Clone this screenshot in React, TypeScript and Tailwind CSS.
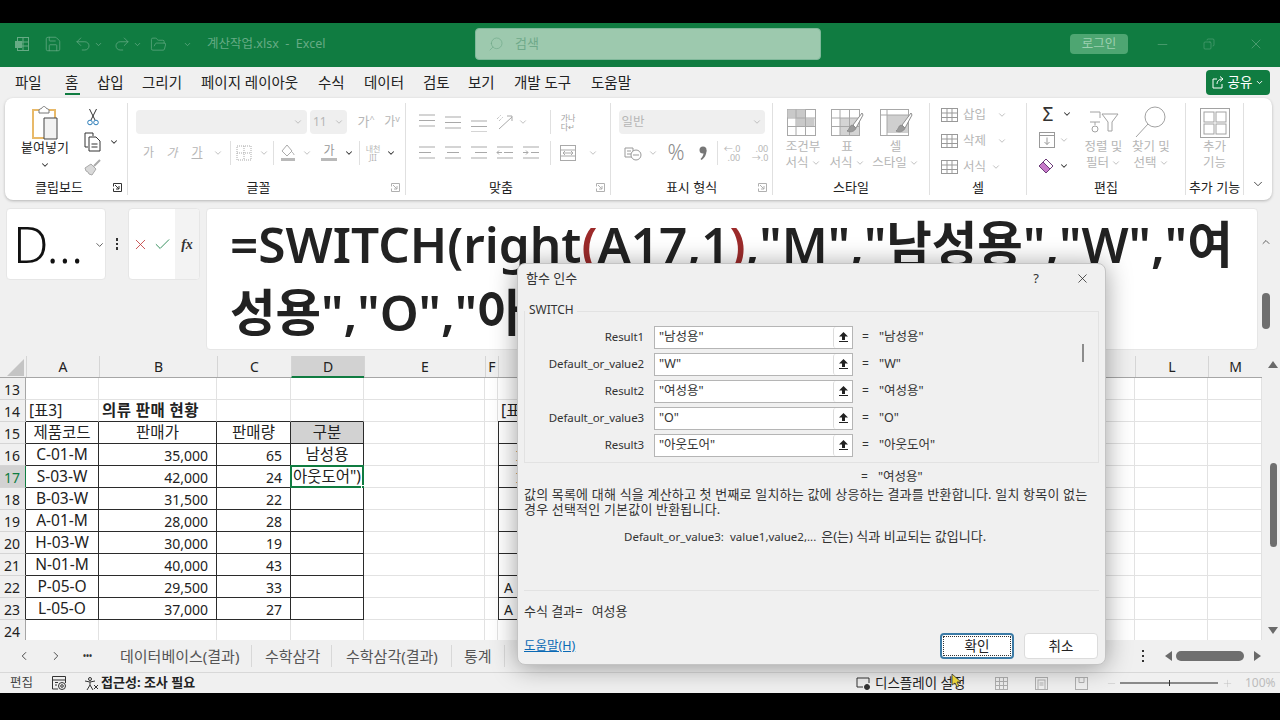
import type { ReactNode } from "react";
import {
  ChevronDown,
  ChevronLeft,
  ChevronRight,
  ChevronUp,
  Check,
  Copy,
  FolderOpen,
  Minus,
  Plus,
  Redo2,
  Save,
  Search,
  Undo2,
  X,
} from "lucide-react";

const uiFont = "font-['Noto_Sans','Noto_Sans_CJK_KR',sans-serif]";

function Chev({ className = "text-[#b5b5b5]" }: { className?: string }) {
  return <ChevronDown size={10} strokeWidth={2} className={className} />;
}

function Ico({
  w,
  h,
  children,
  className = "text-[#a9a9a9]",
}: {
  w: number;
  h: number;
  children: ReactNode;
  className?: string;
}) {
  return (
    <svg width={w} height={h} viewBox={`0 0 ${w} ${h}`} fill="none" stroke="currentColor" strokeWidth="1" className={className}>
      {children}
    </svg>
  );
}

// 맞춤 아이콘: 가로줄 세 개
function Lines({ y = 3, widths = [16, 16, 16], align = "c" }: { y?: number; widths?: number[]; align?: string }) {
  return (
    <Ico w={18} h={20}>
      {widths.map((wd, i) => {
        const x = align === "l" ? 1 : align === "r" ? 17 - wd : 9 - wd / 2;
        return <line key={i} x1={x} x2={x + wd} y1={y + i * 5.5} y2={y + i * 5.5} />;
      })}
    </Ico>
  );
}

function GridSwatch({ kind }: { kind: "cond" | "table" | "cell" }) {
  return (
    <Ico w={34} h={30} className="text-[#9c9c9c]">
      <rect x="1.5" y="1.5" width="28" height="26" stroke="#a8a8a8" />
      {kind === "cond" && <path d="M1.5 1.5h18v9h9v8h-18v-9h-9z" fill="#c9c9c9" stroke="none" />}
      {kind === "table" && <path d="M10 10h19v17h-19z" fill="#d4d4d4" stroke="none" />}
      {kind === "cell" && <path d="M8 7h21v18h-21z" fill="#cfcfcf" stroke="none" />}
      {kind !== "cell" && <path d="M1.5 10h28M1.5 18.500h28M10 1.500v26M19.500 1.500v26" stroke="#a8a8a8" />}
      {kind === "cell" && <path d="M1.500 7h28M8 1.500v26" stroke="#a8a8a8" />}
      {kind !== "cond" && (
        <g>
          <path d="M32 5 23 17l3 3 7-13z" fill="#fff" stroke="#8d8d8d" />
          <path d="M22 17c-3 1-2 4-5 6 4 2 8 0 9-3z" fill="#9a9a9a" stroke="#8d8d8d" />
        </g>
      )}
    </Ico>
  );
}

function Group({
  w,
  label,
  launcher,
  labelClass = "",
  children,
}: {
  w: string;
  label: string;
  launcher?: "dark" | "light";
  labelClass?: string;
  children: ReactNode;
}) {
  return (
    <div className={`flex h-[92px] shrink-0 flex-col border-r border-[#e0e0e0] ${w}`}>
      <div className="h-[74px] pt-[7px]">{children}</div>
      <div className={`relative flex h-[18px] items-center justify-center pt-[4px] text-[13px] text-[#222] ${labelClass}`}>
        {label}
        {launcher && (
          <svg width="9" height="9" viewBox="0 0 9 9" fill="none" className="absolute right-[5px] top-[6px]">
            <path d="M.5 3.500v-3h8v8h-8v-3M2 2l4 4M6 3v3h-3" stroke={launcher === "dark" ? "#333" : "#b0b0b0"} />
          </svg>
        )}
      </div>
    </div>
  );
}

function Slot({ w, children }: { w: string; children?: ReactNode }) {
  return <div className={`flex shrink-0 items-center justify-center ${w}`}>{children}</div>;
}

function VSep({ className = "" }: { className?: string }) {
  return <div className={`h-[24px] w-px shrink-0 bg-[#e0e0e0] ${className}`} />;
}

function Ribbon() {
  const gt = "text-[#b6b6b6]";
  return (
    <div className="h-[107px] shrink-0 bg-[#f0f0f0] px-[5px]">
      <div className="flex h-[102px] w-[1267px] items-center rounded-lg bg-white pl-0 shadow-[0_1px_3px_rgba(0,0,0,0.25)]">
        <Group w="w-[123px]" label="클립보드" launcher="dark" labelClass="pr-[14px]">
          <div className="-mt-[5px] flex pl-[15px]">
            <div className="flex w-[50px] flex-col items-center">
              <svg width="30" height="35" viewBox="0 0 30 35" fill="none">
                <path d="M3 5h22v28H3z" fill="#fff" stroke="#e8b969" strokeWidth="2" />
                <path d="M9 5c0-1 2-1 3-2 1-2 3-2 4 0 1 1 3 1 3 2v3H9z" fill="#fff" stroke="#777" />
                <path d="M14 13h13v21H14z" fill="#f2f2f2" stroke="#444" />
              </svg>
              <div className="text-[13px] leading-[15px] text-[#222]">붙여넣기</div>
              <ChevronDown size={10} strokeWidth={2.5} className="mt-[5px] text-[#333]" />
            </div>
            <div className="ml-[9px] flex w-[48px] flex-col">
              <div className="flex h-[24px] w-[28px] items-center justify-center">
                <svg width="12" height="18" viewBox="0 0 12 18" fill="none">
                  <path d="M2.500 1 8 12M9.500 1 4 12" stroke="#333" />
                  <circle cx="3" cy="14.500" r="2.300" stroke="#2b7cb8" />
                  <circle cx="9" cy="14.500" r="2.300" stroke="#2b7cb8" />
                </svg>
              </div>
              <div className="flex h-[26px] items-center">
                <svg width="18" height="20" viewBox="0 0 18 20" fill="none" className="ml-[5px]">
                  <path d="M4 15H1V1h8v3" stroke="#333" />
                  <path d="M5 5h7l4 4v10H5zM7.500 12h6M7.500 15h6" stroke="#333" />
                </svg>
                <ChevronDown size={10} strokeWidth={2.5} className="ml-[7px] text-[#333]" />
              </div>
              <div className="flex h-[24px] w-[28px] items-center justify-center">
                <svg width="18" height="18" viewBox="0 0 18 18" fill="none">
                  <path d="M1 10l6-4 5 5-4 6-3-1-1-2-2-1z" fill="#d9d9d9" stroke="#aaa" />
                  <path d="M10 8l6-6" stroke="#aaa" strokeWidth="2" />
                </svg>
              </div>
            </div>
          </div>
        </Group>

        <Group w="w-[278px]" label="글꼴" launcher="light" labelClass="pr-[16px]">
          <div className="flex items-center pl-[8px]">
            <div className="flex h-[24px] w-[171px] items-center justify-end rounded bg-[#efefef] pr-[4px]"><Chev /></div>
            <div className="ml-[3px] flex h-[24px] w-[37px] items-center justify-between rounded bg-[#efefef] px-[3px] text-[12px] text-[#b6b6b6]">11 <Chev /></div>
            <div className={`ml-[6px] w-[26px] text-center text-[13px] ${gt}`}>가<sup className="text-[9px]">^</sup></div>
            <div className={`w-[26px] text-center text-[12px] ${gt}`}>가<sup className="text-[9px]">v</sup></div>
          </div>
          <div className={`mt-[7px] flex h-[24px] items-center text-[12px] ${gt}`}>
            <Slot w="w-[21px] ml-[10px]">가</Slot>
            <Slot w="w-[26px]"><span className="italic">가</span></Slot>
            <Slot w="w-[24px]"><span className="underline">가</span></Slot>
            <Slot w="w-[18px]"><Chev /></Slot>
            <VSep className="ml-[3px]" />
            <Slot w="w-[26px]">
              <Ico w={16} h={16}>
                <rect x="1" y="1" width="14" height="14" strokeDasharray="1 1" />
                <path d="M8 1v14M1 8h14" strokeDasharray="1 1" />
              </Ico>
            </Slot>
            <Slot w="w-[13px]"><Chev /></Slot>
            <VSep className="ml-[3px]" />
            <Slot w="w-[28px]">
              <svg width="18" height="18" viewBox="0 0 18 18" fill="none">
                <path d="M8 1l5 6-5 5-5-5zM13 8c1 1 2 2 2 3" stroke="#aaa" />
                <rect x="2" y="14" width="14" height="3" fill="#b9b9b9" />
              </svg>
            </Slot>
            <Slot w="w-[10px]"><Chev /></Slot>
            <Slot w="w-[30px] ml-[2px]">
              <div className="flex flex-col items-center leading-[12px] text-[#999]">
                가<div className="mt-[1px] h-[3px] w-[16px] bg-[#b9b9b9]" />
              </div>
            </Slot>
            <Slot w="w-[10px]"><ChevronDown size={10} strokeWidth={2.500} className="text-[#333]" /></Slot>
            <VSep className="ml-[5px]" />
            <Slot w="w-[26px] text-[8px] leading-[9px]"><span className="text-center">내천<br />JII</span></Slot>
            <Slot w="w-[10px]"><ChevronDown size={10} strokeWidth={2.500} className="text-[#333]" /></Slot>
          </div>
        </Group>

        <Group w="w-[205px]" label="맞춤" launcher="light" labelClass="pr-[14px]">
          <div className="flex h-[24px] items-center pl-[8px]">
            <Slot w="w-[26px]"><Lines y={3} /></Slot>
            <Slot w="w-[26px]"><Lines y={5} /></Slot>
            <Slot w="w-[26px]"><Lines y={9} /></Slot>
            <Slot w="w-[26px]">
              <svg width="18" height="18" viewBox="0 0 18 18" fill="none">
                <path d="M3 16 16 4M11 3h5v5" stroke="#a9a9a9" />
                <path d="M1 6l4-4M3 8l4-4" stroke="#a9a9a9" strokeDasharray="1 1" />
              </svg>
            </Slot>
            <Slot w="w-[10px]"><Chev /></Slot>
            <VSep className="ml-[22px]" />
            <Slot w="w-[34px]">
              <span className="text-center text-[8px] leading-[9px] text-[#a0a0a0]">가나<br />다↵</span>
            </Slot>
          </div>
          <div className="mt-[7px] flex h-[24px] items-center pl-[8px]">
            <Slot w="w-[26px]"><Lines y={4} widths={[16, 12, 16]} align="l" /></Slot>
            <Slot w="w-[26px]"><Lines y={4} widths={[16, 12, 16]} /></Slot>
            <Slot w="w-[26px]"><Lines y={4} widths={[16, 12, 16]} align="r" /></Slot>
            <Slot w="w-[26px]">
              <Ico w={18} h={20}><path d="M1 4h16M8 9.500h9M1 15h16M6 9.500H1m2-2-2 2 2 2" /></Ico>
            </Slot>
            <Slot w="w-[26px]">
              <Ico w={18} h={20}><path d="M1 4h16M1 15h16M1 9.500h5m-2-2 2 2-2 2M9 9.500h8" /></Ico>
            </Slot>
            <VSep className="ml-[6px]" />
            <Slot w="w-[34px]">
              <Ico w={16} h={16}><rect x=".5" y=".5" width="15" height="15" /><path d="M.5 5h15M.5 11h15M3 8h10M5 6 3 8l2 2M11 6l2 2-2 2" /></Ico>
            </Slot>
            <Slot w="w-[16px]"><Chev /></Slot>
          </div>
        </Group>

        <Group w="w-[162px]" label="표시 형식" launcher="light">
          <div className="flex justify-center">
            <div className={`flex h-[24px] w-[146px] items-center justify-between rounded bg-[#efefef] px-[3px] text-[12.500px] ${gt}`}>일반<Chev /></div>
          </div>
          <div className={`mt-[7px] flex h-[24px] items-center ${gt}`}>
            <Slot w="w-[30px] ml-[7px]">
              <Ico w={18} h={15} className="text-[#999]"><path d="M1 2h8v9H1zM3 5h4M3 8h4" /><circle cx="12" cy="9" r="5" fill="#fff" /><path d="M9 9h6" /></Ico>
            </Slot>
            <Slot w="w-[10px]"><Chev /></Slot>
            <Slot w="w-[36px] text-[21px] font-light text-[#8c8c8c]">%</Slot>
            <Slot w="w-[18px]">
              <svg width="8" height="14" viewBox="0 0 8 14" fill="#777">
                <circle cx="4" cy="4" r="3.500" />
                <path d="M7.500 4c0 5-2 8-5 10l-1-1c2-2 3-4 3-6z" />
              </svg>
            </Slot>
            <VSep className="ml-[5px]" />
            <Slot w="w-[28px] text-[9px] leading-[9px]"><span className="text-right">←.0<br />.00</span></Slot>
            <Slot w="w-[28px] text-[9px] leading-[9px]"><span className="text-right">.00<br />→.0</span></Slot>
          </div>
        </Group>

        <Group w="w-[157px]" label="스타일">
          <div className={`-mt-[2px] flex pl-[8px] text-[12.500px] leading-[16px] ${gt}`}>
            {[
              { kind: "cond" as const, a: "조건부", b: "서식", w: "w-[44px]" },
              { kind: "table" as const, a: "표", b: "서식", w: "w-[44px]" },
              { kind: "cell" as const, a: "셀", b: "스타일", w: "w-[53px]" },
            ].map((s) => (
              <div key={s.kind} className={`flex flex-col items-center ${s.w}`}>
                <GridSwatch kind={s.kind} />
                <div className="mt-[1px]">{s.a}</div>
                <div className="flex items-center gap-[2px] whitespace-nowrap">{s.b}<Chev /></div>
              </div>
            ))}
          </div>
        </Group>

        <Group w="w-[97px]" label="셀">
          <div className={`-mt-[8px] flex flex-col pl-[11px] text-[12.500px] ${gt}`}>
            {["삽입", "삭제", "서식"].map((t, i) => (
              <div key={t} className="flex h-[26px] items-center">
                <Ico w={17} h={16} className="text-[#999]">
                  <rect x=".5" y="1.500" width="16" height="13" />
                  <path d="M.5 6h16M.5 10.500h16M6 1.500v13M11 1.500v13" />
                </Ico>
                <span className="ml-[5px] w-[34px]">{t}</span>
                {i < 2 ? <Chev /> : <span className="-ml-[6px]"><Chev /></span>}
              </div>
            ))}
          </div>
        </Group>

        <Group w="w-[159px]" label="편집">
          <div className="flex">
            <div className="-mt-[10px] flex w-[55px] flex-col pl-[11px] pt-[1px]">
              <div className="flex h-[26px] items-center">
                <span className="w-[20px] text-center text-[19px] leading-none text-[#333]">Σ</span>
                <ChevronDown size={10} strokeWidth={2.500} className="ml-[4px] text-[#333]" />
              </div>
              <div className="flex h-[26px] items-center">
                <Ico w={16} h={16} className="ml-[1px] text-[#999]"><rect x=".5" y=".5" width="15" height="15" /><path d="M.5 3.500h15M8 5.500v7m-2.500-2.500 2.500 2.500 2.500-2.500" /></Ico>
                <span className="ml-[4px]"><Chev /></span>
              </div>
              <div className="flex h-[26px] items-center">
                <svg width="17" height="16" viewBox="0 0 17 16" fill="none">
                  <path d="M1 8l7-7 7 7-7 7z" fill="#fff" stroke="#6b3b78" />
                  <path d="M1 8l4-4 7 7-4 4z" fill="#c77ac9" stroke="#6b3b78" />
                </svg>
                <ChevronDown size={10} strokeWidth={2.500} className="ml-[4px] text-[#333]" />
              </div>
            </div>
            <div className={`-mt-[2px] flex w-[43px] flex-col items-center text-[12.500px] leading-[16px] ${gt}`}>
              <svg width="32" height="30" viewBox="0 0 32 30" fill="none" stroke="#a2a2a2">
                <path d="M2 4h10M12 4v6M2 14h10M7 14v3" />
                <circle cx="7" cy="21" r="3" />
                <path d="M14 6h16l-6 8v9h-4v-9z" />
              </svg>
              <div className="mt-[1px] whitespace-nowrap">정렬 및</div>
              <div className="flex items-center gap-[2px]">필터<Chev /></div>
            </div>
            <div className={`ml-[2px] -mt-[4px] flex w-[48px] flex-col items-center text-[12.500px] leading-[16px] ${gt}`}>
              <svg width="34" height="32" viewBox="0 0 34 32" fill="none" stroke="#a2a2a2">
                <circle cx="21" cy="11" r="10" />
                <path d="M14 18 2 31" />
              </svg>
              <div className="mt-[1px] whitespace-nowrap">찾기 및</div>
              <div className="flex items-center gap-[2px]">선택<Chev /></div>
            </div>
          </div>
        </Group>

        <Group w="w-[58px]" label="추가 기능">
          <div className={`-mt-[2px] flex flex-col items-center text-[12.500px] leading-[16px] ${gt}`}>
            <svg width="30" height="30" viewBox="0 0 30 30" fill="none" stroke="#a2a2a2">
              <rect x=".5" y=".5" width="29" height="29" />
              <rect x="4" y="4" width="10" height="10" />
              <rect x="16" y="4" width="10" height="10" />
              <rect x="4" y="16" width="10" height="10" />
              <rect x="16" y="16" width="10" height="10" />
            </svg>
            <div className="mt-[1px]">추가</div>
            <div>기능</div>
          </div>
        </Group>

        <div className="flex h-[92px] flex-1 items-end justify-center pb-[4px]">
          <ChevronDown size={14} strokeWidth={1.500} className="text-[#333]" />
        </div>
      </div>
    </div>
  );
}

function FormulaBar() {
  return (
    <div className="flex h-[151px] shrink-0 items-start bg-[#f0f0f0] pl-[6px] pt-[3px]">
      <div className="flex h-[72px] w-[100px] items-center rounded border border-[#e6e6e6] bg-white pl-[6px]">
        <span className="w-[84px] whitespace-nowrap text-[50px] font-light leading-none text-[#111]">D...</span>
        <ChevronDown size={12} strokeWidth={1.500} className="ml-[2px] mt-[2px] text-[#222]" />
      </div>
      <div className="flex h-[72px] w-[22px] flex-col items-center justify-center gap-[2px]">
        <span className="h-[2.500px] w-[2.500px] bg-[#333]" />
        <span className="h-[2.500px] w-[2.500px] bg-[#333]" />
        <span className="h-[2.500px] w-[2.500px] bg-[#333]" />
      </div>
      <div className="flex h-[72px] w-[72px] items-center overflow-hidden rounded border border-[#e6e6e6] bg-white">
        <X size={17} strokeWidth={1.200} className="ml-[3px] text-[#c23b3b]" />
        <Check size={19} strokeWidth={1.200} className="ml-[4px] text-[#2e8b57]" />
        <div className="ml-[3px] flex h-full flex-1 items-center justify-center bg-[#f3f3f3] font-['Liberation_Serif',serif] text-[14px] font-bold italic text-[#333]">fx</div>
      </div>
      <div className="ml-[6px] h-[142px] w-[1052px] overflow-hidden rounded border border-[#e6e6e6] bg-white pl-[23px] pt-[1px] text-[49.500px] font-semibold leading-[68px] whitespace-nowrap text-[#222]">
        =SWITCH(right<span className="text-[#9c2a2a]">(</span>A17,1<span className="text-[#9c2a2a]">)</span>,"M","남성용","W","여
        <br />
        성용","O","아웃도어")
      </div>
      <div className="ml-[3px] flex h-[142px] w-[10px] flex-col items-center pt-[28px]">
        <ChevronUp size={12} strokeWidth={1.500} className="text-[#333]" />
        <div className="mt-[45px] h-[36px] w-[8px] rounded-full bg-[#6f6f6f]" />
      </div>
    </div>
  );
}

const cols = [
  { key: "A", w: "w-[73px]", label: "A" },
  { key: "B", w: "w-[118px]", label: "B" },
  { key: "C", w: "w-[74px]", label: "C" },
  { key: "D", w: "w-[73px]", label: "D" },
  { key: "E", w: "w-[121px]", label: "E" },
  { key: "F", w: "w-[13px]", label: "F" },
  { key: "G", w: "w-[62px]", label: "" },
  { key: "H", w: "w-[575px]", label: "" },
  { key: "L", w: "w-[73px]", label: "L" },
  { key: "M", w: "w-[54px]", label: "M" },
];

const sales = [
  ["C-01-M", "35,000", "65", "남성용"],
  ["S-03-W", "42,000", "24", '아웃도어")'],
  ["B-03-W", "31,500", "22", ""],
  ["A-01-M", "28,000", "28", ""],
  ["H-03-W", "30,000", "19", ""],
  ["N-01-M", "40,000", "43", ""],
  ["P-05-O", "29,500", "33", ""],
  ["L-05-O", "37,000", "27", ""],
];

function cellText(row: number, key: string): string {
  if (row === 14) return key === "A" ? "[표3]" : key === "B" ? "의류 판매 현황" : key === "G" ? "[표" : "";
  if (row === 15) return { A: "제품코드", B: "판매가", C: "판매량", D: "구분" }[key] ?? "";
  if (row >= 16 && row <= 23) {
    const i = "ABCD".indexOf(key);
    if (i >= 0) return sales[row - 16][i];
    if (key === "G" && (row === 22 || row === 23)) return "A";
    if (key === "G" && (row === 16 || row === 17)) return "I";
  }
  return "";
}

function Cell({ row, col }: { row: number; col: (typeof cols)[number] }) {
  const k = col.key;
  const text = cellText(row, k);
  const inTable = "ABCD".includes(k) && row >= 15 && row <= 23;
  const aboveTable = "ABCD".includes(k) && row === 14;
  const inBox = k === "G" && row >= 15 && row <= 23;
  const aboveBox = k === "G" && row === 14;
  const selected = k === "D" && row === 17;
  const hangul = /[가-힣]/.test(text);
  const code = k === "A" && row >= 16 && row <= 23;

  const border = inTable
    ? "border-r border-b border-r-[#2b2b2b] border-b-[#2b2b2b]"
    : aboveTable || aboveBox
      ? "border-r border-b border-r-[#e2e2e2] border-b-[#2b2b2b]"
      : inBox
        ? "border-l border-r border-b border-l-[#2b2b2b] border-r-[#2b2b2b] border-b-[#2b2b2b]"
        : k === "F" && (row >= 15 && row <= 23)
          ? "border-b border-b-[#e2e2e2]"
          : "border-r border-b border-[#e2e2e2]";

  let align = "justify-center";
  if ((k === "B" || k === "C") && row >= 16) align = "justify-end pr-[8px]";
  if (row === 14) align = "justify-start pl-[3px]";
  if (k === "G") align = text === "A" ? "justify-start pl-[5px]" : text === "I" ? "justify-start pl-[17px]" : "justify-start pl-[3px]";

  const size = row === 14 && k === "B" ? "text-[15.500px] font-bold tracking-[0.4px]" : hangul ? "text-[15.500px]" : code ? "text-[15.500px]" : "text-[14px]";

  return (
    <div
      className={`relative flex h-[22px] shrink-0 items-center whitespace-nowrap pt-px text-[#222] ${col.w} ${border} ${align} ${size} ${k === "D" && row === 15 ? "bg-[#d2d2d2]" : "bg-white"}`}
    >
      {text}
      {selected && (
        <>
          <span className="absolute -inset-px border-2 border-[#107c41]" />
          <span className="absolute -bottom-[3px] -right-[3px] h-[5px] w-[5px] border border-white bg-[#107c41]" />
        </>
      )}
    </div>
  );
}

function Sheet() {
  const rows = Array.from({ length: 12 }, (_, i) => 13 + i);
  return (
    <div className="flex h-[284px] shrink-0 overflow-hidden bg-[#f0f0f0]">
      <div className="w-[1262px] shrink-0 overflow-hidden">
        <div className="flex h-[22px] border-b border-[#a6a6a6] bg-[#f0f0f0]">
          <div className="flex w-[26px] shrink-0 items-end justify-end pb-[1px] pr-[2px]">
            <div className="h-0 w-0 border-b-[17px] border-l-[17px] border-b-[#c4c4c4] border-l-transparent" />
          </div>
          {cols.map((c) => (
            <div
              key={c.key}
              className={`flex shrink-0 items-center justify-center border-l border-[#d5d5d5] text-[14px] text-[#222] ${c.w} ${c.key === "D" ? "-mb-px border-b-2 border-b-[#107c41] bg-[#d2d2d2] text-[#107c41]" : ""}`}
            >
              {c.label}
            </div>
          ))}
        </div>
        {rows.map((r) => (
          <div key={r} className="flex">
            <div
              className={`flex h-[22px] w-[26px] shrink-0 items-center border-b border-r pl-[4px] pt-px text-[14px] ${r === 17 ? "border-b-[#d5d5d5] border-r-[#107c41] bg-[#d2d2d2] text-[#107c41]" : r >= 15 && r <= 23 ? "border-b-[#d5d5d5] border-r-[#2b2b2b] bg-[#f0f0f0] text-[#222]" : "border-b-[#d5d5d5] border-r-[#a6a6a6] bg-[#f0f0f0] text-[#222]"}`}
            >
              {r}
            </div>
            {cols.map((c) => (
              <Cell key={c.key} row={r} col={c} />
            ))}
          </div>
        ))}
      </div>
      <div className="flex flex-1 flex-col items-center pl-[4px] pt-[5px]">
        <div className="h-0 w-0 border-x-[5px] border-b-[7px] border-x-transparent border-b-[#6a6a6a]" />
        <div className="mt-[95px] h-[84px] w-[7px] rounded-full bg-[#6f6f6f]" />
        <div className="mt-[80px] h-0 w-0 border-x-[5px] border-t-[7px] border-x-transparent border-t-[#6a6a6a]" />
      </div>
    </div>
  );
}

function Tabs() {
  return (
    <div className="flex h-[32px] shrink-0 items-center bg-[#f0f0f0] text-[#444]">
      <div className="w-[17px]" />
      <ChevronLeft size={14} strokeWidth={1.500} className="text-[#333]" />
      <ChevronRight size={14} strokeWidth={1.500} className="ml-[18px] text-[#333]" />
      <span className="ml-[20px] w-[15px] whitespace-nowrap text-[8px] font-bold leading-none text-[#333]">•••</span>
      <div className="ml-[22px] flex items-center text-[15px] text-[#555]">
        <span className="w-[132px] whitespace-nowrap border-r border-[#d8d8d8]">데이터베이스(결과)</span>
        <span className="w-[80px] whitespace-nowrap border-r border-[#d8d8d8] pl-[13px]">수학삼각</span>
        <span className="w-[120px] whitespace-nowrap border-r border-[#d8d8d8] pl-[14px]">수학삼각(결과)</span>
        <span className="w-[53px] whitespace-nowrap border-r border-[#d8d8d8] pl-[12px]">통계</span>
      </div>
      <div className="ml-auto flex items-center pr-[19px]">
        <div className="flex flex-col gap-[3px]">
          <span className="h-[2px] w-[2px] bg-[#333]" />
          <span className="h-[2px] w-[2px] bg-[#333]" />
          <span className="h-[2px] w-[2px] bg-[#333]" />
        </div>
        <div className="ml-[21px] h-0 w-0 border-y-[5px] border-r-[7px] border-y-transparent border-r-[#6a6a6a]" />
        <div className="ml-[4px] h-[10px] w-[68px] rounded-full bg-[#6f6f6f]" />
        <div className="ml-[10px] h-0 w-0 border-y-[5px] border-l-[7px] border-y-transparent border-l-[#6a6a6a]" />
      </div>
    </div>
  );
}

function StatusBar() {
  return (
    <div className="flex h-[21px] shrink-0 items-center border-t border-[#d8d8d8] bg-[#f0f0f0] pl-[10px] text-[12.500px] text-[#444]">
      <span className="w-[42px]">편집</span>
      <svg width="15" height="14" viewBox="0 0 15 14" fill="none" stroke="#333">
        <path d="M6 13H.5V.5h13V7M.5 4h13M3 6.500h3M3 9h2" />
        <circle cx="10" cy="10" r="3.500" />
        <circle cx="10" cy="10" r="1.300" />
      </svg>
      <svg width="15" height="15" viewBox="0 0 15 15" fill="none" stroke="#333" className="ml-[17px]">
        <circle cx="6" cy="3" r="1.500" />
        <path d="M1 5l5 1 5-1M6 6v3l-3 5M6 9l3 5M10 9l4 4M14 9l-4 4" />
      </svg>
      <span className="ml-[2px] w-[97px] whitespace-nowrap text-[13px] font-bold text-[#222]">접근성: 조사 필요</span>
      <svg width="15" height="13" viewBox="0 0 15 13" fill="none" stroke="#333" className="ml-[658px]">
        <path d="M7 10H1V1h12v5" />
        <circle cx="11" cy="10" r="2.500" fill="#333" />
      </svg>
      <span className="ml-[4px] w-[100px] whitespace-nowrap text-[13.500px] text-[#222]">디스플레이 설정</span>
      <div className="ml-[20px] flex w-[111px] items-center gap-[27px]">
        <Ico w={13} h={13} className="text-[#b0b0b0]"><rect x=".5" y=".5" width="12" height="12" /><path d="M4.500.5v12M8.500.5v12M.5 4.500h12M.5 8.500h12" /></Ico>
        <Ico w={13} h={13} className="text-[#b0b0b0]"><rect x=".5" y=".5" width="12" height="12" /><rect x="3" y="3" width="7" height="10" /><path d="M4.500 6h4M4.500 8h4" /></Ico>
        <Ico w={13} h={13} className="text-[#b0b0b0]"><rect x=".5" y=".5" width="12" height="12" /><path d="M4 .5v5h5v-5" /></Ico>
      </div>
      <Minus size={11} strokeWidth={1} className="text-[#bbb]" />
      <div className="relative ml-[3px] h-[2px] w-[98px] bg-[#8a8a8a]">
        <span className="absolute left-[49px] top-[-2px] h-[6px] w-px bg-[#333]" />
      </div>
      <Plus size={11} strokeWidth={1} className="ml-[4px] text-[#bbb]" />
      <span className="ml-[12px] text-[12px] text-[#bcbcbc]">100%</span>
    </div>
  );
}

const args = [
  { name: "Result1", value: '"남성용"' },
  { name: "Default_or_value2", value: '"W"' },
  { name: "Result2", value: '"여성용"' },
  { name: "Default_or_value3", value: '"O"' },
  { name: "Result3", value: '"아웃도어"' },
];

function ArgDialog() {
  return (
    <div className="absolute left-[517px] top-[263px] flex h-[402px] w-[589px] flex-col rounded-lg border border-[#c4c4c4] bg-[#f0f0f0] px-[6px] text-[12px] text-[#333] shadow-[0_2px_26px_rgba(0,0,0,0.38)]">
      <div className="flex h-[29px] shrink-0 items-center pl-[2px] text-[13px]">
        함수 인수
        <span className="ml-auto mr-[36px] text-[13px]">?</span>
        <X size={15} strokeWidth={1.200} className="mr-[9px] text-[#222]" />
      </div>
      <div className="mt-[18px] h-[152px] shrink-0 border border-[#e2e2e2] pt-[14px] relative">
        <span className="absolute -top-[10px] left-0 bg-[#f0f0f0] pl-[4px] pr-[3px] text-[12px] leading-[16px]">SWITCH</span>
        <div className="flex flex-col gap-[5px]">
          {args.map((a) => (
            <div key={a.name} className="flex h-[22px] items-center">
              <div className="w-[120px] pr-[1px] text-right text-[11.500px] tracking-[-0.1px]">{a.name}</div>
              <div className="ml-[9px] flex h-[23px] w-[199px] items-center justify-between border border-[#b5b5b5] bg-white pl-[4px] text-[12.500px]">
                {a.value}
                <div className="flex h-[21px] w-[19px] items-center justify-center rounded-[3px] border-l border-[#dcdcdc] bg-white text-[#222]">
                  <svg width="9" height="10" viewBox="0 0 9 10" fill="#222">
                    <path d="M4.500 0 9 4.500H6V8H3V4.500H0zM0 9h9v1H0z" />
                  </svg>
                </div>
              </div>
              <span className="ml-[9px]">=</span>
              <span className="ml-[10px] text-[12.500px]">{a.value}</span>
            </div>
          ))}
        </div>
        <div className="absolute left-[557px] top-[32px] h-[18px] w-[2px] bg-[#8c8c8c]" />
      </div>
      <div className="ml-[337px] mt-[6px] flex h-[16px] shrink-0 items-center">
        <span>=</span>
        <span className="ml-[10px] text-[12.500px]">"여성용"</span>
      </div>
      <div className="mt-[2px] shrink-0 whitespace-nowrap text-[13px] leading-[15px] tracking-[0.18px]">
        값의 목록에 대해 식을 계산하고 첫 번째로 일치하는 값에 상응하는 결과를 반환합니다. 일치 항목이 없는
        <br />
        경우 선택적인 기본값이 반환됩니다.
      </div>
      <div className="ml-[100px] mt-[12px] flex h-[16px] shrink-0 items-center whitespace-nowrap text-[11.500px]">
        Default_or_value3:<span className="ml-[6px]">value1,value2,...</span>
        <span className="ml-[5px] text-[13px]">은(는) 식과 비교되는 값입니다.</span>
      </div>
      <div className="mt-[45px] h-px shrink-0 bg-[#e2e2e2]" />
      <div className="mt-[13px] flex h-[16px] shrink-0 items-center text-[13px]">
        수식 결과=<span className="ml-[9px]">여성용</span>
      </div>
      <div className="mt-[13px] flex h-[26px] shrink-0 items-center">
        <span className="w-[52px] whitespace-nowrap text-[12.500px] text-[#0b6ab5] underline">도움말(H)</span>
        <button className="ml-[364px] flex h-[26px] w-[74px] items-center justify-center rounded border-2 border-[#3b7aa5] bg-white text-[13.500px] text-[#222] outline-1 -outline-offset-4 outline-dotted outline-[#333]">확인</button>
        <button className="ml-[10px] flex h-[26px] w-[74px] items-center justify-center rounded border border-[#dcdcdc] bg-white text-[13.500px] text-[#222]">취소</button>
      </div>
    </div>
  );
}

const menus = [
  { t: "파일", w: "w-[50px]" },
  { t: "홈", w: "w-[32px]" },
  { t: "삽입", w: "w-[45px]" },
  { t: "그리기", w: "w-[59px]" },
  { t: "페이지 레이아웃", w: "w-[117px]" },
  { t: "수식", w: "w-[46px]" },
  { t: "데이터", w: "w-[59px]" },
  { t: "검토", w: "w-[45px]" },
  { t: "보기", w: "w-[46px]" },
  { t: "개발 도구", w: "w-[77px]" },
  { t: "도움말", w: "w-[60px]" },
];

export default function App() {
  const qa = "text-[#66ab85]";
  return (
    <div className={`relative flex h-[720px] w-[1280px] flex-col overflow-hidden bg-black ${uiFont}`}>
      <div className="h-[23px] shrink-0 bg-black" />
      {/* 제목 표시줄 */}
      <div className="flex h-[44px] shrink-0 items-center bg-[#107c41] pb-[2px]">
        <svg width="16" height="16" viewBox="0 0 16 16" fill="none" className="ml-[14px]">
          <rect x="3.500" y="1.500" width="11" height="13" stroke="#66ab85" />
          <path d="M9 1.500v13M3.500 6h11M3.500 10h11" stroke="#66ab85" />
          <rect x="1" y="5" width="7" height="7" fill="#66ab85" />
        </svg>
        <Save size={18} strokeWidth={1} className={`ml-[14px] ${qa}`} />
        <Undo2 size={18} strokeWidth={1} className={`ml-[12px] ${qa}`} />
        <ChevronDown size={9} className={`ml-[2px] ${qa}`} />
        <Redo2 size={18} strokeWidth={1} className={`ml-[10px] ${qa}`} />
        <ChevronDown size={9} className={`ml-[2px] ${qa}`} />
        <FolderOpen size={17} strokeWidth={1} className={`ml-[8px] ${qa}`} />
        <ChevronDown size={9} className={`ml-[16px] ${qa}`} />
        <span className={`ml-[15px] w-[268px] whitespace-nowrap text-[12.500px] ${qa}`}>계산작업.xlsx&nbsp; -&nbsp; Excel</span>
        <div className="flex h-[32px] w-[346px] items-center rounded border border-[#7fb89a] bg-[#9dc9ae] pl-[12px] text-[13px] text-[#6fa98a]">
          <Search size={16} strokeWidth={1} className="-scale-x-100" />
          <span className="ml-[11px]">검색</span>
        </div>
        <div className="ml-[249px] flex h-[20px] w-[58px] items-center justify-center rounded-sm bg-[#4ea672] text-[12.500px] text-[#9dd0b0]">로그인</div>
        <Minus size={15} strokeWidth={1} className={`ml-[27px] ${qa}`} />
        <Copy size={12} strokeWidth={1} className={`ml-[33px] -scale-x-100 ${qa}`} />
        <X size={16} strokeWidth={1} className={`ml-[33px] ${qa}`} />
      </div>
      {/* 메뉴 */}
      <div className="flex h-[31px] shrink-0 items-center bg-[#f0f0f0] pl-[15px] text-[14.500px] text-[#222]">
        {menus.map((m) => (
          <div key={m.t} className={`relative shrink-0 whitespace-nowrap ${m.w}`}>
            {m.t}
            {m.t === "홈" && <span className="absolute left-0 top-[21px] h-[2px] w-[15px] bg-[#107c41]" />}
          </div>
        ))}
        <div className="ml-auto mr-[10px] flex h-[25px] w-[64px] items-center justify-center gap-[3px] rounded-sm bg-[#107c41] text-[13.500px] text-white">
          <svg width="13" height="13" viewBox="0 0 13 13" fill="none" stroke="#fff">
            <path d="M5 3H1v9h9V8M5 8c0-3 2-5 6-5M8 .5l3 2.500-3 2.500" />
          </svg>
          공유
          <ChevronDown size={9} strokeWidth={2.500} />
        </div>
      </div>
      <Ribbon />
      <FormulaBar />
      <Sheet />
      <Tabs />
      <StatusBar />
      <div className="flex-1 bg-black" />

      <ArgDialog />

      {/* 마우스 커서 */}
      <svg width="11" height="15" viewBox="0 0 11 15" className="absolute left-[951px] top-[673px]">
        <path d="M1 1v11l3-2 2 4 2-1-2-4h4z" fill="#e8d23a" stroke="#333" strokeWidth=".8" />
      </svg>
    </div>
  );
}
